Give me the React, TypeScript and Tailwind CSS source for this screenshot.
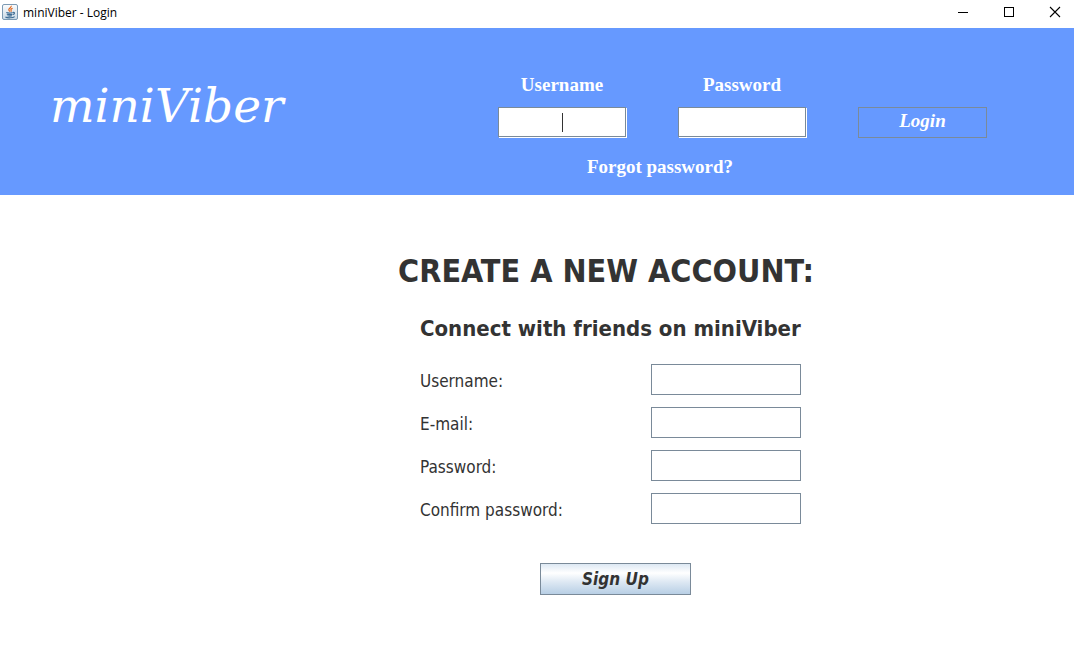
import React from "react";

const metalBorder = "block w-full border border-[#7a8a99] bg-white outline-none";

function JavaIcon() {
  return (
    <svg viewBox="0 0 16 16" className="h-4 w-4" aria-hidden="true">
      <defs>
        <linearGradient id="tile" x1="0" y1="0" x2="0" y2="1">
          <stop offset="0" stopColor="#fbfcfd" />
          <stop offset="1" stopColor="#c9d9e6" />
        </linearGradient>
      </defs>
      <rect x="0.5" y="0.5" width="15" height="15" rx="1.5" fill="url(#tile)" stroke="#7c9ab3" />
      <path d="M9.200 1.800c.6 1.700-2.700 2.500-2.400 4 .1.700.8 1.100 1 1.800M10.600 4.200c-1.500.6-2.100 1.200-1.500 2.100.4.500.2.900-.3 1.400" fill="none" stroke="#e2661b" strokeWidth="1.200" />
      <path d="M4.300 8.600c1.500.5 4.800.5 6.400-.1M4.800 10.200c1.600.5 4.200.5 5.600 0M5.400 11.700c1.300.4 3.400.4 4.500 0M11 8.400c2.100-.3 1.900 1.600-.1 2.100M3.400 13c1.800 1.200 7.600 1.100 9.300-.3" fill="none" stroke="#3f6d94" strokeWidth="1.100" />
    </svg>
  );
}

function TitleBar() {
  const button = "flex h-6 w-[46px] items-center justify-center";
  return (
    <div className="flex h-7 items-start justify-between bg-white text-black">
      <div className="flex items-start gap-[5px] pt-1 pl-[2px]">
        <JavaIcon />
        <span className="font-['Open_Sans','Noto_Sans',sans-serif] text-[12px] leading-[18px]">miniViber - Login</span>
      </div>
      <div className="-mr-1 flex">
        <button type="button" aria-label="Minimize" className={button}>
          <svg width="12" height="12" viewBox="0 0 12 12" shapeRendering="crispEdges">
            <path d="M1 6.500h10" stroke="#000" />
          </svg>
        </button>
        <button type="button" aria-label="Maximize" className={button}>
          <svg width="12" height="12" viewBox="0 0 12 12" shapeRendering="crispEdges">
            <rect x="1.500" y="1.500" width="9" height="9" fill="none" stroke="#000" />
          </svg>
        </button>
        <button type="button" aria-label="Close" className={button}>
          <svg width="12" height="12" viewBox="0 0 12 12">
            <path d="M1 1l10 10M11 1L1 11" stroke="#000" strokeWidth="1.100" />
          </svg>
        </button>
      </div>
    </div>
  );
}

function LoginHeader() {
  const label = "block h-[33px] text-center";
  const field = `${metalBorder} h-[30px] text-center font-normal text-[#333] shadow-[1px_1px_0_#fff]`;
  return (
    <header className="flex justify-between bg-[#6699ff] pt-[46px] pr-[87px] pb-[17px] pl-[50px] font-['Liberation_Serif',serif] text-white">
      <h1 className="pt-1 font-['DejaVu_Serif','Liberation_Serif',serif] text-[47px] leading-[56px] italic">miniViber</h1>
      <form className="text-[19px] leading-[22px] font-bold" onSubmit={(e) => e.preventDefault()}>
        <div className="flex items-end gap-[52px]">
          <div className="w-32">
            <label htmlFor="login-user" className={label}>Username</label>
            <div className="relative">
              <input id="login-user" type="text" className={field} />
              <span className="pointer-events-none absolute top-[6px] left-1/2 h-[19px] w-px bg-[#333]" />
            </div>
          </div>
          <div className="w-32">
            <label htmlFor="login-pass" className={label}>Password</label>
            <input id="login-pass" type="password" className={field} />
          </div>
          <button type="submit" className="-mb-px h-[31px] w-[129px] border border-[#7a8a99] pb-1 text-center leading-[22px] italic">
            Login
          </button>
        </div>
        <div className="w-[308px] pt-[19px] pl-4 text-center">
          <a href="#forgot">Forgot password?</a>
        </div>
      </form>
    </header>
  );
}

const fields = [
  { id: "username", label: "Username:", type: "text" },
  { id: "email", label: "E-mail:", type: "email" },
  { id: "password", label: "Password:", type: "password" },
  { id: "confirm", label: "Confirm password:", type: "password" },
];

function SignUp() {
  return (
    <main className="flex justify-center bg-white pt-14 pb-8 pl-[138px] font-['DejaVu_Sans_Condensed','Noto_Sans',sans-serif] text-[#333]">
      <div className="w-[424px]">
        <h2 className="text-center text-[32px] leading-10 font-bold whitespace-nowrap">CREATE A NEW ACCOUNT:</h2>
        <form className="pt-6 pr-[17px] pl-[26px]" onSubmit={(e) => e.preventDefault()}>
          <h3 className="text-[22px] leading-7 font-bold whitespace-nowrap">Connect with friends on miniViber</h3>
          <div className="flex flex-col gap-3 pt-[21px]">
            {fields.map((f) => (
              <div key={f.id} className="flex items-center justify-between">
                <label htmlFor={f.id} className="pt-[2px] text-[17px] leading-6">{f.label}</label>
                <div className="w-[150px]">
                  <input id={f.id} type={f.type} className={`${metalBorder} h-[31px] px-1`} />
                </div>
              </div>
            ))}
          </div>
          <div className="flex justify-center pt-[39px] pl-[10px]">
            <button
              type="submit"
              className="h-8 w-[151px] border border-[#7a8a99] bg-[linear-gradient(to_bottom,#dde8f3_0%,#ffffff_30%,#dde8f3_60%,#b8cfe5_100%)] text-[17px] leading-6 font-bold italic"
            >
              Sign Up
            </button>
          </div>
        </form>
      </div>
    </main>
  );
}

export default function App() {
  return (
    <div className="min-h-screen bg-white">
      <TitleBar />
      <LoginHeader />
      <SignUp />
    </div>
  );
}
